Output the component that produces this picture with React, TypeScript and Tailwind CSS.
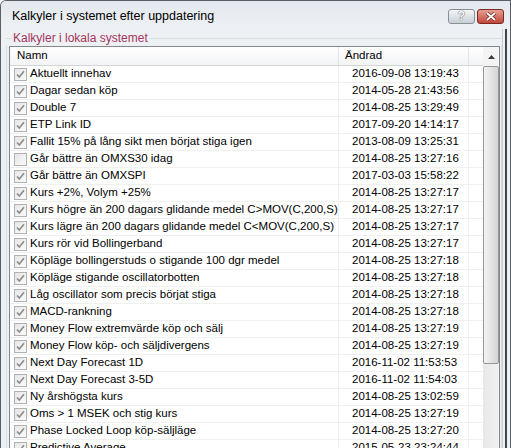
import React from 'react'

type Row = { name: string; date: string; checked: boolean }

const rows: Row[] = [
  { name: 'Aktuellt innehav', date: '2016-09-08 13:19:43', checked: true },
  { name: 'Dagar sedan köp', date: '2014-05-28 21:43:56', checked: true },
  { name: 'Double 7', date: '2014-08-25 13:29:49', checked: true },
  { name: 'ETP Link ID', date: '2017-09-20 14:14:17', checked: true },
  { name: 'Fallit 15% på lång sikt men börjat stiga igen', date: '2013-08-09 13:25:31', checked: true },
  { name: 'Går bättre än OMXS30 idag', date: '2014-08-25 13:27:16', checked: false },
  { name: 'Går bättre än OMXSPI', date: '2017-03-03 15:58:22', checked: true },
  { name: 'Kurs +2%, Volym +25%', date: '2014-08-25 13:27:17', checked: true },
  { name: 'Kurs högre än 200 dagars glidande medel C>MOV(C,200,S)', date: '2014-08-25 13:27:17', checked: true },
  { name: 'Kurs lägre än 200 dagars glidande medel C<MOV(C,200,S)', date: '2014-08-25 13:27:17', checked: true },
  { name: 'Kurs rör vid Bollingerband', date: '2014-08-25 13:27:17', checked: true },
  { name: 'Köpläge bollingerstuds o stigande 100 dgr medel', date: '2014-08-25 13:27:18', checked: true },
  { name: 'Köpläge stigande oscillatorbotten', date: '2014-08-25 13:27:18', checked: true },
  { name: 'Låg oscillator som precis börjat stiga', date: '2014-08-25 13:27:18', checked: true },
  { name: 'MACD-rankning', date: '2014-08-25 13:27:18', checked: true },
  { name: 'Money Flow extremvärde köp och sälj', date: '2014-08-25 13:27:19', checked: true },
  { name: 'Money Flow köp- och säljdivergens', date: '2014-08-25 13:27:19', checked: true },
  { name: 'Next Day Forecast 1D', date: '2016-11-02 11:53:53', checked: true },
  { name: 'Next Day Forecast 3-5D', date: '2016-11-02 11:54:03', checked: true },
  { name: 'Ny årshögsta kurs', date: '2014-08-25 13:02:59', checked: true },
  { name: 'Oms > 1 MSEK och stig kurs', date: '2014-08-25 13:27:19', checked: true },
  { name: 'Phase Locked Loop köp-säljläge', date: '2014-08-25 13:27:20', checked: true },
  { name: 'Predictive Average', date: '2015-05-23 23:24:44', checked: true },
]

const CheckBox = ({ checked }: { checked: boolean }) => (
  <div className="w-[13px] h-[13px] shrink-0 border border-[#b1b1b1] bg-gradient-to-br from-[#e6e6e6] to-[#fbfbfb] flex items-center justify-center">
    {checked && (
      <svg width="9" height="9" viewBox="0 0 9 9">
        <path d="M1 4.5 L3.3 7 L8 1.2" fill="none" stroke="#8c8c8c" strokeWidth="1.6" />
      </svg>
    )}
  </div>
)

export default function App() {
  return (
    <div
      className="w-[511px] h-[448px] overflow-hidden bg-[#e9edf2] border-t border-l border-r border-[#5a5f66] rounded-tl-[6px] flex flex-col text-black"
      style={{ fontFamily: '"Liberation Sans", Arial, sans-serif' }}
    >
      <div className="h-[28px] shrink-0 flex items-center pl-[11px] pr-[6px] bg-gradient-to-b from-[#e3e8ee] to-[#eef1f5]">
        <span className="text-[12.5px] flex-1 pt-[3px]">Kalkyler i systemet efter uppdatering</span>
        <div className="flex gap-[2px] items-center mt-[2px]">
          <div className="w-[27px] h-[15px] rounded-[3px] border border-[#8a8f96] bg-gradient-to-b from-[#f4f6f8] to-[#c9cfd6] flex items-center justify-center text-[12px] font-bold text-white leading-none" style={{ textShadow: '0 0 1px #555, 0 0 1px #555' }}>
            ?
          </div>
          <div className="w-[27px] h-[15px] rounded-[3px] border border-[#7a2a22] bg-gradient-to-b from-[#e5a093] to-[#c2453a] flex items-center justify-center">
            <svg width="12" height="9" viewBox="0 0 12 9">
              <path d="M2 1 L10 8 M10 1 L2 8" stroke="#5a1a14" strokeWidth="3.2" />
              <path d="M2 1 L10 8 M10 1 L2 8" stroke="#ffffff" strokeWidth="2" />
            </svg>
          </div>
        </div>
      </div>

      <div className="flex-1 flex bg-[#eef1f4] pl-[5px] pr-[3px]">
        <div className="flex-1 flex flex-col">
          <div className="h-[16px] relative flex items-end">
            <div className="absolute left-0 right-0 top-[9px] h-[1px] bg-[#d5dfe5]" />
            <span className="relative ml-[6px] px-[1px] bg-[#eef1f4] text-[12px] leading-[14px] text-[#a5345e]">
              Kalkyler i lokala systemet
            </span>
          </div>
          <div className="flex-1 border-l border-r border-[#d5dfe5] pl-[2px] pr-[1px] pt-[1px]">
            <div className="h-full border border-[#828790] bg-white flex text-[11.5px]">
              <div className="flex-1 flex flex-col overflow-hidden">
                <div className="h-[19px] shrink-0 flex bg-gradient-to-b from-white to-[#f3f4f6] border-b border-[#d5d5d5]">
                  <div className="w-[329px] pl-[7px] flex items-center border-r border-[#e3e5e8]">Namn</div>
                  <div className="w-[130px] pl-[6px] flex items-center border-r border-[#e3e5e8]">Ändrad</div>
                  <div className="flex-1" />
                </div>
                {rows.map((r, i) => (
                  <div key={i} className="h-[17px] shrink-0 flex border-b border-[#f0f0f0]">
                    <div className="w-[329px] shrink-0 flex items-center gap-[3px] pl-[4px] border-r border-[#f0f0f0] whitespace-nowrap overflow-hidden">
                      <CheckBox checked={r.checked} />
                      <span>{r.name}</span>
                    </div>
                    <div className="w-[130px] shrink-0 flex items-center pl-[13px] border-r border-[#f0f0f0] whitespace-nowrap">
                      {r.date}
                    </div>
                    <div className="flex-1" />
                  </div>
                ))}
              </div>
              <div className="w-[16px] shrink-0 flex flex-col bg-gradient-to-r from-[#e8e8e8] to-[#f2f2f2]">
                <div className="h-[19px] shrink-0 flex items-center justify-center bg-[#f4f4f4]">
                  <svg width="7" height="4" viewBox="0 0 7 4">
                    <path d="M0 4 L3.5 0 L7 4 Z" fill="#3c3c3c" />
                  </svg>
                </div>
                <div className="h-[298px] shrink-0 rounded-[2px] border border-[#979797] bg-gradient-to-r from-[#f4f4f4] to-[#d4d4d4]" />
                <div className="flex-1" />
              </div>
            </div>
          </div>
        </div>
        <div className="w-[5px] shrink-0 border-l border-[#c7ccd2] border-r-2 border-r-[#3f444a]" />
      </div>
    </div>
  )
}
